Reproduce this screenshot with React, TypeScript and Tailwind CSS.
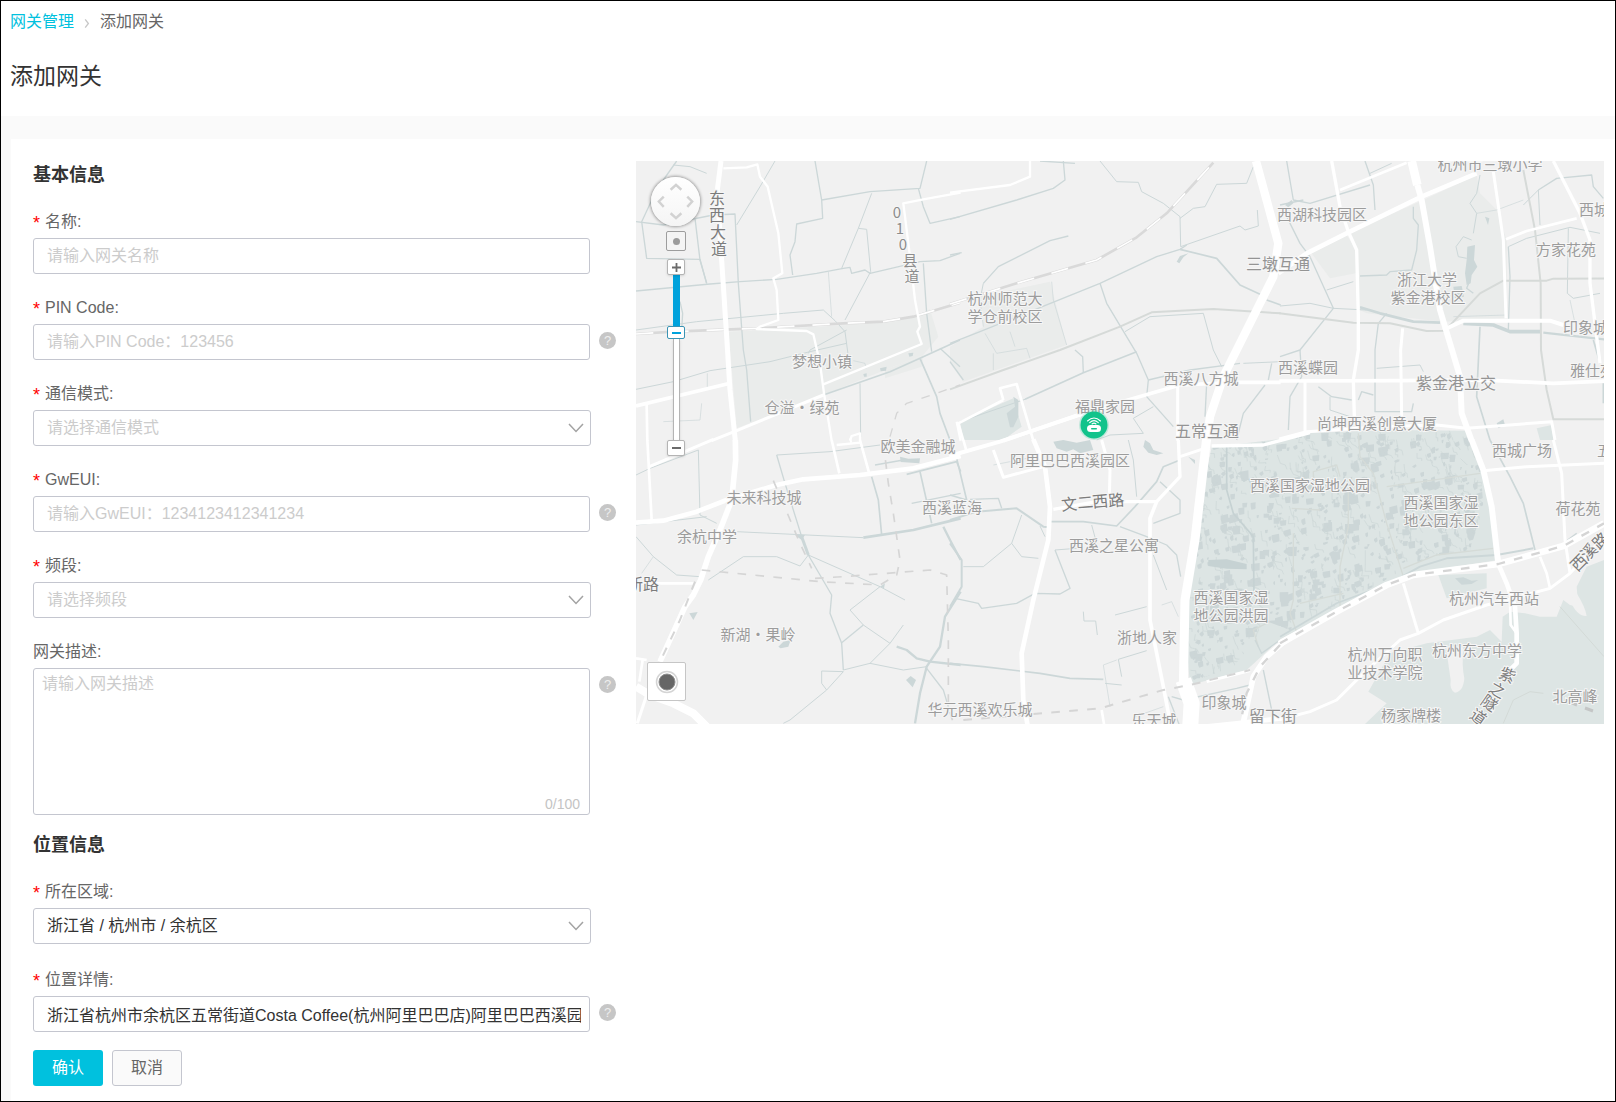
import * as React from 'react';

type Line = [points: string, width: number];

interface Tile {
  x: number;
  y: number;
  park?: string[];
  green?: string[];
  water?: Line[];
  ponds?: string[];
  gray?: Line[];
  roads?: Line[];
  rail?: Line[];
  metro?: Line[];
  paths?: string[];
}

// Wetland outline, in the coordinates of the middle bottom tile
const WETLAND =
  '785,22 990,-3 1080,-22 1340,-30 1550,-28 1610,95 1635,240 1645,360 1390,400 1310,440 990,598 890,690 720,735 705,560 740,250';

// The part of it that is covered with small ponds
const POND_AREA =
  '785,22 990,0 1080,-22 1340,-30 1540,-28 1590,60 1600,200 1560,330 1440,350 1340,400 1290,430 1020,570 940,540 915,600 850,680 725,725 708,560 740,250';

const TILES: Tile[] = [
  {
    x: 630,
    y: 150,
    park: ['296,545 650,525 850,500 900,478 925,560 880,615 765,660 580,735 320,835', '765,660 880,615 875,650 765,685'],
    ponds: ['835,610 850,608 848,618 838,620', '750,655 770,650 768,662 752,664', '700,672 710,670 710,680 702,680'],
    water: [
      ['130,45 180,50 230,70', 3],
      ['140,33 100,90 70,140 35,215 50,325 210,328 230,400', 4],
      ['18,215 100,225 250,195 315,192 325,400 340,600 350,660 362,815', 4],
      ['195,205 210,330 230,400', 4],
      ['435,33 390,110 320,225', 3],
      ['18,423 240,402 330,395 440,388 560,370 640,355 660,352 665,370 705,360 720,370 870,335 930,332 990,310', 4],
      ['555,33 575,150 578,205 500,222 495,275 480,315 488,375', 4],
      ['575,150 720,125 870,115 890,33', 4],
      ['725,130 685,235 635,355', 3],
      ['685,235 710,238 722,365 645,510', 3],
      ['865,115 880,170 900,220 990,200', 4],
      ['880,340 890,490 905,605', 4],
      ['595,365 605,500', 2],
      ['18,540 200,515 460,490 580,480 615,512 645,545 655,620', 3],
      ['650,540 540,600 535,610', 3],
      ['18,718 130,695 240,662 420,635 540,605 650,580', 3],
      ['580,735 780,665 870,625 990,570', 5],
      ['870,625 920,740 930,790 960,870', 5],
      ['930,595 990,650', 4],
      ['150,455 158,490 155,540', 4],
      ['690,700 692,860', 3],
      ['100,815 210,810 215,760', 2],
      ['232,670 232,720', 2],
      ['670,632 705,640 708,655', 2],
    ],
    rail: [['18,552 130,545 380,535 640,520 760,515 850,500 990,458', 8]],
    roads: [
      ['273,33 262,120 275,330 290,560 300,720 316,872', 15],
      ['280,55 350,52 382,43 390,80 413,110 445,250 457,370 430,385 440,420 445,510 390,530 380,537 530,543 550,553 570,640 582,730 605,872', 7],
      ['992,128 880,148 820,160 825,200 840,320 855,450 870,530 862,545 875,582 580,703', 7],
      ['18,768 300,700', 11],
      ['50,765 52,872', 8],
      ['245,872 320,842 580,735', 9],
      ['660,872 665,858 690,850 690,872', 7],
      ['980,815 992,872', 7],
    ],
    metro: [['780,860 800,790 830,760 890,740 990,705', 4]],
  },
  {
    x: 950,
    y: 150,
    park: ['90,440 300,395 350,585 40,695 0,640 0,590 100,530'],
    green: ['30,815 190,745 215,830 160,870 40,870'],
    ponds: ['170,790 195,770 190,740 205,750 205,800 190,832 180,832', '680,335 690,318 715,310 700,322 688,340'],
    water: [
      ['0,208 200,150 310,115 345,90 340,33', 4],
      ['100,400 145,350 300,272 355,258', 4],
      ['100,400 92,440', 3],
      ['0,580 90,545 450,400 620,320 690,298 710,285', 4],
      ['450,33 500,95 565,97 575,125 640,160 690,200 692,290 870,228 885,240 925,228 922,180', 3],
      ['690,205 730,175 765,170 800,103 890,100 910,50', 3],
      ['690,298 800,325 870,405 935,435', 5],
      ['950,450 992,465', 5],
      ['450,400 470,460 560,610 595,690 590,740 670,830', 4],
      ['525,545 600,500 760,490 790,600 815,650', 3],
      ['225,748 400,668 560,605', 5],
      ['375,600 398,620 400,668', 4],
      ['0,635 40,690', 4],
      ['30,815 225,748', 3],
      ['595,690 720,660 870,640', 4],
      ['880,640 992,635', 3],
      ['965,640 955,690', 4],
      ['945,705 880,790 860,870', 4],
      ['770,700 765,800', 4],
      ['440,870 480,855 580,850 550,805 610,770', 3],
      ['0,315 35,308', 4],
      ['270,33 375,40', 4],
      ['105,550 140,610 230,595 240,625', 2],
      ['180,545 195,590', 2],
      ['90,450 100,530', 2],
      ['305,395 310,450 350,585', 2],
      ['130,610 130,660', 2],
    ],
    gray: [['0,718 160,660 330,600 510,530 605,487 790,477 992,490', 6]],
    rail: [['0,462 200,400 440,330 560,262 650,190 790,38', 8]],
    roads: [
      ['0,128 180,105 240,80 240,33', 7],
      ['160,872 430,780 690,705 860,697 992,697', 11],
      ['160,750 150,715 200,702 250,872', 8],
      ['160,750 25,820 40,872', 8],
      ['683,710 683,872', 9],
      ['918,33 985,280 970,380 880,560 820,680 780,800 770,872', 25],
    ],
  },
  {
    x: 1280,
    y: 150,
    park: ['430,150 590,75 600,130 650,180 680,270 680,505 490,515 260,490 238,480 230,300 205,250', '95,310 200,255 228,300 228,370 150,385'],
    green: ['770,835 815,825 820,870 780,870'],
    ponds: [
      '520,410 545,408 552,440 525,445',
      '562,290 585,285 582,330 592,350 575,375 572,400 560,405 555,370 560,330',
      '650,820 670,808 675,825 655,835',
      '615,200 628,205 624,225',
      '15,165 35,150 40,160 25,172',
    ],
    water: [
      ['20,33 40,150 90,160 270,105', 4],
      ['255,33 280,105 285,180', 4],
      ['270,70 335,40', 3],
      ['0,165 70,150', 5],
      ['20,200 60,280 90,320 160,475 60,600 0,620', 4],
      ['140,420 220,395', 3],
      ['0,468 90,460 160,475 260,480', 3],
      ['400,170 400,205 415,225 410,300 395,360 330,365 320,375 240,378', 4],
      ['600,75 590,130 570,160 590,190 580,250', 3],
      ['575,270 550,260 528,290 535,320 560,325', 3],
      ['568,395 560,415 580,430', 4],
      ['590,190 650,180 730,150', 2],
      ['240,472 300,490 400,515 480,518', 8],
      ['550,520 640,525 690,545 780,545', 11],
      ['790,548 1008,572', 7],
      ['520,500 680,495', 2],
      ['685,290 690,380 685,540', 4],
      ['685,290 740,265 870,232 960,250', 3],
      ['775,120 830,85 935,75 940,110 970,145', 4],
      ['775,120 780,225', 3],
      ['730,165 775,120', 3],
      ['865,235 862,430 880,445 960,430', 3],
      ['870,450 885,520', 2],
      ['320,490 295,520 285,600 285,785 395,785 400,760', 4],
      ['290,655 420,645 430,665', 3],
      ['600,530 590,740 630,870', 5],
      ['60,600 65,680 30,740 25,840', 4],
      ['115,710 155,740 215,750', 4],
      ['150,740 150,780 210,800', 3],
      ['235,750 245,725 280,735', 4],
      ['940,570 960,640', 5],
      ['970,700 970,760', 5],
    ],
    gray: [
      ['-2,490 220,518 330,520 440,543 495,542 600,430 670,392 800,392 820,386 1008,385', 6],
      ['730,60 765,240 782,400 783,600 800,720 820,808 1008,808', 6],
    ],
    roads: [
      ['-5,370 80,310 210,245 425,140 590,70', 14],
      ['155,33 180,170 205,245 230,300 235,500 235,600 220,690 223,800', 10],
      ['180,120 380,38', 8],
      ['640,65 670,270 678,505', 9],
      ['820,33 900,190 930,270 930,400 960,640', 10],
      ['678,268 740,243 890,205', 8],
      ['490,540 550,512 810,512 850,525', 12],
      ['-2,693 360,692 530,690 650,692 820,700 1008,692', 11],
      ['368,535 362,600 365,800', 9],
      ['75,695 75,845', 9],
      ['-2,867 80,845 300,830 470,825 560,835 815,815 825,870', 9],
      ['395,33 412,105', 26],
      ['412,105 425,150 450,290 480,480 540,680 545,790 575,872', 18],
    ],
  },
  {
    x: 630,
    y: 440,
    ponds: [
      '810,50 835,56 870,55 868,70 812,66',
      '445,620 460,605 482,600 475,620 452,625',
      '178,520 203,516 190,540',
      '828,720 842,708 858,720 848,742',
      '495,285 525,285 515,300',
      '750,440 765,430 762,445',
    ],
    water: [
      ['18,105 60,85 205,30 210,225 260,250', 3],
      ['440,45 600,35 750,15', 3],
      ['440,45 465,130 515,290 535,345', 4],
      ['515,290 535,345', 9],
      ['535,345 605,465 600,520 635,610 640,690', 4],
      ['18,255 230,230', 3],
      ['320,275 700,293', 3],
      ['700,293 850,270 992,235', 8],
      ['18,290 70,350 140,405 210,410', 3],
      ['70,350 35,400', 2],
      ['235,420 340,350 440,350 510,378 535,345 750,440 825,480', 3],
      ['750,440 660,510 700,555 780,610 820,555', 3],
      ['700,555 635,608', 4],
      ['725,110 745,180 755,285', 5],
      ['870,95 905,250', 5],
      ['830,103 980,65 992,95', 5],
      ['735,75 820,60', 4],
      ['940,260 960,300 992,360', 7],
      ['845,190 992,160', 4],
      ['992,455 945,530 930,620 890,680 870,760 855,850', 7],
      ['800,620 830,630 860,655 900,665 992,675', 7],
      ['640,690 720,670 820,690 890,680', 3],
      ['720,670 780,610', 3],
      ['640,695 575,693 575,730 590,750 640,695', 3],
      ['590,750 480,840 460,850', 3],
      ['890,685 940,750 955,800', 4],
    ],
    roads: [
      ['18,248 100,242 200,215 290,180 440,135 520,118 690,105 850,85 992,48', 14],
      ['52,0 65,240', 8],
      ['58,80 250,-2', 9],
      ['605,0 628,100', 8],
      ['690,0 717,98', 8],
      ['620,15 690,8', 7],
      ['660,-5 664,8', 6],
      ['20,430 195,430', 8],
      ['316,0 317,60 305,180 270,270 235,350 212,420 190,465 165,500 90,665', 17],
      ['18,740 60,765 130,790 190,820 250,880', 24],
      ['18,655 50,660', 8],
      ['38,660 28,725', 8],
      ['50,765 22,850', 9],
    ],
    metro: [
      ['215,390 440,412 570,425 750,435 800,405 810,360 790,220 775,130 765,50', 5],
      ['430,122 470,215 510,310 545,385', 5],
      ['555,415 640,410 900,390 950,405 955,600 955,800 970,850', 5],
      ['195,425 150,540 90,665', 6],
    ],
  },
  {
    x: 950,
    y: 440,
    green: [WETLAND],
    ponds: [
      '585,0 600,10 610,30 640,40 620,45 595,38 580,20',
      '310,5 340,0 380,8 420,0 430,30 390,40 370,28 350,35 320,25',
      '715,50 735,60 735,72',
    ],
    water: [
      ['20,55 50,180 0,165', 5],
      ['60,178 145,175 155,205', 4],
      ['0,240 80,215 200,205 280,260 300,262', 6],
      ['300,245 400,245 500,258 555,200 620,125 640,80 690,60', 5],
      ['215,225 185,310 100,380 40,380', 3],
      ['185,310 215,350 265,355', 3],
      ['0,310 35,360 35,440 15,475 0,500', 6],
      ['15,475 85,490 95,505 200,490 255,460 330,462 360,445 315,330', 4],
      ['315,330 380,325 ', 3],
      ['270,258 285,290', 3],
      ['425,255 440,310', 3],
      ['510,260 590,290 650,315 680,345 692,410', 4],
      ['400,515 402,543 437,543 442,585', 3],
      ['495,525 590,500', 3],
      ['610,345 650,450', 3],
      ['635,495 665,485 685,530', 2],
      ['0,670 100,680 270,700 360,715 460,718', 5],
      ['590,632 505,658 515,710', 3],
      ['515,735 465,730', 3],
      ['500,660 460,675 480,800', 2],
      ['630,125 690,180 690,220 610,250', 4],
      ['535,0 550,60 560,170', 3],
      ['130,75 230,55 300,40', 2],
      ['665,770 700,780 860,745 900,735', 4],
      ['940,690 965,810', 4],
      ['555,830 640,800', 2],
      ['655,770 690,860', 4],
      ['915,600 935,640 990,600', 4],
    ],
    roads: [
      ['-2,48 150,5 430,-90', 12],
      ['250,-2 285,80 300,200 295,300 250,480 215,640 220,780 235,870', 14],
      ['455,0 480,90 478,180', 9],
      ['310,208 440,185 620,185 690,110 685,0', 10],
      ['130,30 160,112 280,80', 9],
      ['40,0 50,35', 8],
      ['690,50 755,28', 9],
      ['620,185 600,235 600,540 640,740 665,870', 11],
      ['785,18 940,15 1080,-22', 10],
      ['455,810 465,870', 8],
      ['770,-5 735,300 705,480 700,740', 27],
      ['700,720 725,790 720,870', 48],
      ['1010,598 950,650 910,710 875,870', 17],
      ['745,862 860,850 992,835', 14],
      ['770,725 900,692', 9],
    ],
    metro: [
      ['40,840 250,822', 6],
      ['250,822 450,805 640,750 720,735 900,690', 6],
      ['990,615 930,680 890,760 875,830', 7],
    ],
  },
  {
    x: 1280,
    y: 440,
    green: [
      '265,755 330,640 440,610 590,590 630,570 665,605 668,530 690,515 735,520 780,530 830,530 850,480 870,495 895,500 890,440 920,380 972,360 972,852 255,852 320,790',
      '475,405 620,400 620,445 500,475',
    ],
    ponds: ['525,415 550,412 575,422 595,420 575,432 545,434'],
    water: [
      ['630,0 690,110 730,190 765,330', 5],
      ['330,430 420,380 500,355 650,345 760,325', 6],
      ['0,590 170,490 330,430', 5],
      ['850,310 890,280', 4],
    ],
    paths: ['840,500 972,650', '670,850 700,780 750,755 790,760'],
    roads: [
      ['-2,612 170,515 320,435 400,405 655,372 850,318 972,250', 20],
      ['575,0 610,90 635,200 655,372', 18],
      ['655,372 680,430 705,500 710,580 710,670 690,690', 14],
      ['690,480 692,555 710,580', 8],
      ['40,828 90,815 170,780 250,700 360,600 415,580 490,540 620,495 700,475 810,445 870,400 972,290', 9],
      ['370,430 415,580', 9],
      ['780,350 800,400 810,445', 8],
      ['820,0 845,100 855,300 870,400', 9],
      ['610,92 740,80 972,70', 9],
      ['-2,838 40,828', 12],
    ],
    metro: [['0,610 170,515 320,435 400,405 655,372 850,318 972,250', 7]],
  },
];

const WETLAND_PATHS = [
  '1225,-20 1230,50 1270,100 1310,250 1360,410',
  '1090,140 1090,95 1160,75 1170,110',
  '1310,140 1590,100',
  '1025,205 1110,210',
  '1195,130 1195,260 1170,380 1170,500',
  '1030,280 1030,480 1020,520 1045,590',
  '1360,385 1460,345 1630,325',
  '1050,490 1180,460',
  '960,545 910,570 925,620',
];

// Small ponds of the wetland, placed by a seeded generator so the map is stable
function buildPonds(count: number) {
  let seed = 11;
  const next = () => {
    seed = (seed * 16807) % 2147483647;
    return seed / 2147483647;
  };
  return Array.from({ length: count }, () => {
    const x = Math.round(710 + next() * 880);
    const y = Math.round(-30 + next() * 760);
    const size = next() ** 3;
    const w = Math.round(4 + next() * 6 + size * 20);
    const h = Math.round(4 + next() * 8 + size * 18);
    const k = Math.round(next() * 7);
    return `M${x},${y + k} l${w},${-k} l${k - 3},${h} l${-w + 3},${k} l${-k},${-Math.round(h / 2)} z`;
  }).join(' ');
}

// Narrow ditches between the ponds
function buildDitches(count: number) {
  let seed = 97;
  const next = () => {
    seed = (seed * 16807) % 2147483647;
    return seed / 2147483647;
  };
  return Array.from({ length: count }, () => {
    const x = Math.round(710 + next() * 880);
    const y = Math.round(-30 + next() * 760);
    const a = Math.round(next() * 14 - 4);
    const b = Math.round(8 + next() * 22);
    const c = Math.round(next() * 22);
    return `M${x},${y} l${a},${b} l${c},${Math.round(a / 2)} l${Math.round(a / 2)},${Math.round(b / 2)}`;
  }).join(' ');
}

const PONDS = buildPonds(950);
const DITCHES = buildDitches(420);

type Anchor = 'start' | 'middle' | 'end';
interface Place {
  x: number;
  y: number;
  text: string;
  anchor?: Anchor;
}

const PLACES: Place[] = [
  { x: 822, y: 360, text: '梦想小镇' },
  { x: 802, y: 406, text: '仓溢·绿苑' },
  { x: 1005, y: 297, text: '杭州师范大' },
  { x: 1005, y: 315, text: '学仓前校区' },
  { x: 1201, y: 377, text: '西溪八方城' },
  { x: 1105, y: 405, text: '福鼎家园' },
  { x: 1490, y: 163, text: '杭州市三墩小学' },
  { x: 1322, y: 213, text: '西湖科技园区' },
  { x: 1579, y: 208, text: '西城', anchor: 'start' },
  { x: 1566, y: 248, text: '方家花苑' },
  { x: 1427, y: 278, text: '浙江大学' },
  { x: 1428, y: 296, text: '紫金港校区' },
  { x: 1563, y: 326, text: '印象城', anchor: 'start' },
  { x: 1308, y: 366, text: '西溪蝶园' },
  { x: 1570, y: 369, text: '雅仕苑', anchor: 'start' },
  { x: 1377, y: 422, text: '尚坤西溪创意大厦' },
  { x: 918, y: 445, text: '欧美金融城' },
  { x: 764, y: 496, text: '未来科技城' },
  { x: 707, y: 535, text: '余杭中学' },
  { x: 758, y: 633, text: '新湖·果岭' },
  { x: 952, y: 506, text: '西溪蓝海' },
  { x: 980, y: 708, text: '华元西溪欢乐城' },
  { x: 1070, y: 459, text: '阿里巴巴西溪园区' },
  { x: 1114, y: 544, text: '西溪之星公寓' },
  { x: 1310, y: 484, text: '西溪国家湿地公园' },
  { x: 1231, y: 596, text: '西溪国家湿' },
  { x: 1231, y: 614, text: '地公园洪园' },
  { x: 1147, y: 636, text: '浙地人家' },
  { x: 1154, y: 719, text: '乐天城' },
  { x: 1224, y: 701, text: '印象城' },
  { x: 1522, y: 449, text: '西城广场' },
  { x: 1597, y: 449, text: '五', anchor: 'start' },
  { x: 1441, y: 501, text: '西溪国家湿' },
  { x: 1441, y: 519, text: '地公园东区' },
  { x: 1578, y: 507, text: '荷花苑' },
  { x: 1494, y: 597, text: '杭州汽车西站' },
  { x: 1385, y: 653, text: '杭州万向职' },
  { x: 1385, y: 671, text: '业技术学院' },
  { x: 1477, y: 649, text: '杭州东方中学' },
  { x: 1575, y: 695, text: '北高峰' },
  { x: 1411, y: 714, text: '杨家牌楼' },
];

const JUNCTIONS: Place[] = [
  { x: 1278, y: 263, text: '三墩互通' },
  { x: 1207, y: 430, text: '五常互通' },
  { x: 1456, y: 382, text: '紫金港立交' },
  { x: 1273, y: 715, text: '留下街' },
];

// Road names run along the road, one glyph at a time: [glyph, x, y, angle]
const ROAD_NAMES: [string, number, number, number][] = [
  ['东', 717, 197, 0],
  ['西', 717, 214, 0],
  ['大', 718, 231, 0],
  ['道', 719, 248, 0],
  ['文', 1069, 503, -5],
  ['二', 1085, 501, -5],
  ['西', 1100, 500, -5],
  ['路', 1116, 499, -5],
  ['西', 1578, 562, -45],
  ['溪', 1588, 551, -45],
  ['路', 1600, 540, -45],
  ['紫', 1508, 674, 25],
  ['之', 1498, 689, 30],
  ['隧', 1490, 702, 35],
  ['道', 1479, 716, 35],
  ['新', 635, 583, 0],
  ['路', 651, 583, 0],
];

const COUNTY_ROAD: [string, number, number][] = [
  ['0', 897, 211],
  ['1', 900, 227],
  ['0', 903, 243],
  ['县', 910, 259],
  ['道', 912, 275],
];

function Lines({ items, className }: { items?: Line[]; className: string }) {
  return (
    <g className={className} fill="none" strokeLinejoin="round">
      {items?.map(([points, width]) => (
        <polyline key={points} points={points} strokeWidth={width} />
      ))}
    </g>
  );
}

function Areas({ items, className }: { items?: string[]; className: string }) {
  return (
    <g className={className}>
      {items?.map((points) => (
        <polygon key={points} points={points} />
      ))}
    </g>
  );
}

function tileTransform(tile: { x: number; y: number }) {
  return `translate(${tile.x} ${tile.y}) scale(${1 / 3})`;
}

function BaseMap() {
  return (
    <svg
      viewBox="636 161 968 563"
      preserveAspectRatio="xMidYMid slice"
      className="block h-[563px] w-full bg-[#f1f1f1]"
      role="img"
      aria-label="地图"
    >
      <defs>
        <clipPath id="ponds">
          <polygon points={POND_AREA} />
        </clipPath>
      </defs>

      {TILES.map((tile, i) => (
        <g key={i} transform={tileTransform(tile)}>
          <Areas items={tile.park} className="fill-[#eaeceb]" />
          <Areas items={tile.green} className="fill-[#dde5e4]" />
        </g>
      ))}

      {/* Wetland texture */}
      <g transform={tileTransform(TILES[4])}>
        <g clipPath="url(#ponds)">
          <path d={PONDS} className="fill-[#ccd6d7]" />
          <path d={DITCHES} fill="none" strokeWidth={2} className="stroke-[#ccd6d7]" />
        </g>
        <polyline points="830,20 830,150 850,220 910,290 912,470" fill="none" strokeWidth={5} className="stroke-[#c6d2d3]" />
        <polygon points="775,360 830,358 890,372 890,388 830,386 775,378" className="fill-[#c6d2d3]" />
        <g fill="none" strokeWidth={4} className="stroke-[#d5dbd7]">
          {WETLAND_PATHS.map((p) => (
            <polyline key={p} points={p} />
          ))}
        </g>
      </g>

      {/* Inlets between the hills */}
      <g transform={tileTransform(TILES[5])} className="fill-[#f1f1f1]">
        <path d="M498,622 L550,622 Q545,680 553,715 Q550,755 525,758 Q508,750 512,720 Z" />
        <path d="M870,480 Q890,530 920,528 Q915,500 890,460 Z" />
      </g>

      {TILES.map((tile, i) => (
        <g key={i} transform={tileTransform(tile)}>
          <Lines items={tile.water} className="stroke-[#ccd7d8]" />
          <Areas items={tile.ponds} className="fill-[#ccd7d8]" />
          <g fill="none" strokeWidth={3} className="stroke-[#d3dad7]">
            {tile.paths?.map((p) => (
              <polyline key={p} points={p} />
            ))}
          </g>
        </g>
      ))}

      {TILES.map((tile, i) => (
        <g key={i} transform={tileTransform(tile)}>
          <Lines items={tile.gray} className="stroke-[#d6dad8]" />
          <Lines items={tile.rail} className="stroke-[#d9d9d9]" />
          <g fill="none" strokeWidth={5} strokeDasharray="52 54" className="stroke-white">
            {tile.rail?.map(([p]) => (
              <polyline key={p} points={p} />
            ))}
          </g>
        </g>
      ))}

      {TILES.map((tile, i) => (
        <g key={i} transform={tileTransform(tile)}>
          <Lines items={tile.roads} className="stroke-white" />
        </g>
      ))}

      {TILES.map((tile, i) => (
        <g key={i} transform={tileTransform(tile)} strokeDasharray="26 28">
          <Lines items={tile.metro} className="stroke-[#d5d5d5]" />
        </g>
      ))}
      <path d="M1570,702 l7,3 M1585,708 l8,3" strokeWidth={3} className="stroke-[#c4c6c6]" />

      {/* Labels */}
      <g
        className="fill-[#9c9c9c] stroke-[#f6f6f6] font-['Noto_Sans_CJK_SC',sans-serif] text-[15px]"
        strokeWidth={2}
        paintOrder="stroke"
        dominantBaseline="central"
      >
        {PLACES.map((p) => (
          <text key={`${p.x}-${p.y}`} x={p.x} y={p.y} textAnchor={p.anchor ?? 'middle'}>
            {p.text}
          </text>
        ))}
        <g className="fill-[#8c8c8c]">
          {COUNTY_ROAD.map(([glyph, x, y]) => (
            <text key={y} x={x} y={y} textAnchor="middle">
              {glyph}
            </text>
          ))}
        </g>
      </g>
      <g
        className="fill-[#949494] stroke-[#f6f6f6] font-['Noto_Sans_CJK_SC',sans-serif] text-[16px]"
        strokeWidth={2}
        paintOrder="stroke"
        dominantBaseline="central"
        textAnchor="middle"
      >
        {JUNCTIONS.map((p) => (
          <text key={p.text} x={p.x} y={p.y}>
            {p.text}
          </text>
        ))}
        <g className="fill-[#7c7c7c]">
          {ROAD_NAMES.map(([glyph, x, y, angle]) => (
            <text key={`${x}-${y}`} x={x} y={y} transform={`rotate(${angle} ${x} ${y})`}>
              {glyph}
            </text>
          ))}
        </g>
      </g>

      {/* Gateway marker */}
      <g transform="translate(1094 425)">
        <circle r="15" className="fill-[#13c38b]/20" />
        <circle r="13.5" className="fill-[#12c38b]" />
        <rect x="-7" y="0" width="14" height="7" rx="3.5" className="fill-white" />
        <rect x="-3" y="3" width="6" height="1.5" rx="0.7" className="fill-[#12c38b]" />
        <g fill="none" strokeLinecap="round" strokeWidth="1.1" className="stroke-white">
          <path d="M-6.5,-4 Q0,-10 6.5,-4" />
          <path d="M-4.3,-2.4 Q0,-6.4 4.3,-2.4" />
          <path d="M-2,-1 Q0,-2.8 2,-1" />
        </g>
      </g>
    </svg>
  );
}

function MapControls() {
  return (
    <>
      {/* Pan */}
      <button
        type="button"
        aria-label="平移地图"
        className="absolute top-4 left-[15px] size-[49px] rounded-full bg-linear-to-b from-white to-[#f5f5f5] shadow-[0_0_3px_1px_rgba(0,0,0,0.35)]"
      >
        <svg viewBox="0 0 50 50" className="size-full" fill="none" strokeWidth="2.5">
          <g className="stroke-[#d2d2d2]">
            <path d="M20,13 L25.500,8 L31,13" />
            <path d="M20,37 L25.500,42 L31,37" />
            <path d="M13,20 L8,25 L13,30.500" />
            <path d="M37,20 L42,25 L37,30.500" />
          </g>
        </svg>
      </button>

      <button
        type="button"
        aria-label="回到中心"
        className="absolute top-[70px] left-[30px] flex size-5 items-center justify-center rounded-xs border border-[#9d9d9d] bg-[#f4f4f4]"
      >
        <span className="size-[7px] rounded-full bg-[#9b9b9b]" />
      </button>

      {/* Zoom */}
      <div className="absolute top-[98px] left-[31px] flex w-[18px] flex-col items-center">
        <button
          type="button"
          aria-label="放大"
          className="relative z-10 flex h-4 w-full items-center justify-center rounded-xs border border-[#b4b4b4] bg-white shadow-sm"
        >
          <svg viewBox="0 0 10 10" className="size-[9px] stroke-[#6b6b6b]" strokeWidth="2">
            <path d="M0,5 H10 M5,0 V10" />
          </svg>
        </button>
        <div className="h-[51px] w-[7px] bg-[#00a2dc]" />
        <div className="relative z-10 flex h-[13px] w-full items-center justify-center rounded-xs border border-[#3a93b4] bg-white">
          <span className="h-[2px] w-[9px] bg-[#00a2dc]" />
        </div>
        <div className="h-[101px] w-[7px] border-x border-[#b4b4b4] bg-white shadow-sm" />
        <button
          type="button"
          aria-label="缩小"
          className="relative z-10 flex h-4 w-full items-center justify-center rounded-xs border border-[#b4b4b4] bg-white shadow-sm"
        >
          <span className="h-[2px] w-[9px] bg-[#6b6b6b]" />
        </button>
        <input
          type="range"
          min={3}
          max={18}
          defaultValue={13}
          aria-label="缩放级别"
          className="absolute top-4 left-0 h-[165px] w-[18px] opacity-0 [writing-mode:vertical-lr]"
        />
      </div>

      {/* Locate */}
      <button
        type="button"
        aria-label="定位"
        className="absolute bottom-[23px] left-[11px] flex size-[39px] items-center justify-center rounded-xs border border-[#c6c6c6] bg-white"
      >
        <svg viewBox="0 0 24 24" className="size-6">
          <circle cx="12" cy="12" r="10.500" className="fill-white stroke-[#d4d4d4]" strokeWidth="1.500" />
          <circle cx="12" cy="12" r="8" className="fill-[#666] stroke-[#8f8f8f]" strokeWidth="1" />
        </svg>
      </button>
    </>
  );
}

function HelpIcon() {
  return (
    <span
      title="帮助"
      className="mt-2 flex size-[17px] shrink-0 items-center justify-center rounded-full bg-[#c6c6c6] text-[13px] leading-none text-[#eeeeee]"
    >
      ?
    </span>
  );
}

interface FieldProps {
  id: string;
  label: string;
  required?: boolean;
  help?: boolean;
  children: React.ReactNode;
}

function Field({ id, label, required = true, help, children }: FieldProps) {
  return (
    <div>
      <label htmlFor={id} className="mb-1 flex h-6 leading-6 text-[#666]">
        {required && <span className="w-3 pt-px text-[18px] text-[#f00]">*</span>}
        {label}:
      </label>
      <div className="flex items-start gap-[9px]">
        {children}
        {help && <HelpIcon />}
      </div>
    </div>
  );
}

const INPUT =
  'block h-9 w-[557px] rounded-[3px] border border-[#c4c6cf] bg-white pr-2 pl-[13px] text-[#333] outline-none placeholder:text-[#ccc]';

function Select({ id, value, placeholder }: { id: string; value?: string; placeholder?: string }) {
  return (
    <div className="relative w-[558px]">
      <select
        id={id}
        defaultValue={value ?? ''}
        className={`block h-9 w-full appearance-none rounded-[3px] border border-[#c4c6cf] bg-white px-[13px] outline-none ${value ? 'text-[#333]' : 'text-[#ccc]'}`}
      >
        <option value={value ?? ''}>{value ?? placeholder}</option>
      </select>
      <svg
        viewBox="0 0 16 10"
        fill="none"
        strokeWidth="1.500"
        className="pointer-events-none absolute top-[13px] right-[7px] h-[10px] w-4 stroke-[#a3a3a3]"
      >
        <path d="M1,1 L8,8.500 L15,1" />
      </svg>
    </div>
  );
}

export default function App() {
  return (
    <div className="flex min-h-screen flex-col border border-black bg-[#fafafa] font-['Liberation_Sans','Noto_Sans_CJK_SC',sans-serif] text-base text-[#333]">
      {/* Header */}
      <header className="bg-white px-[9px] pt-[9px] pb-6">
        <nav className="flex items-center leading-6">
          <a href="#" className="text-[#00c1de]">
            网关管理
          </a>
          <svg viewBox="0 0 6 10" fill="none" strokeWidth="1.500" className="mx-[10px] mt-0.5 h-[9px] w-[6px] stroke-[#c8c8c8]">
            <path d="M1,0.500 L4.500,5 L1,9.500" />
          </svg>
          <span className="text-[#666]">添加网关</span>
        </nav>
        <h1 className="mt-[26px] text-[23px] leading-8">添加网关</h1>
      </header>

      {/* Panel */}
      <main className="mt-[23px] ml-[10px] flex flex-1 items-start gap-5 bg-white px-[22px] pt-[22px] pr-[11px] pb-[15px]">
        <form className="w-[583px] shrink-0" onSubmit={(e) => e.preventDefault()}>
          <h2 className="mb-[21px] text-lg leading-7 font-bold">基本信息</h2>
          <div className="flex flex-col gap-[22px]">
            <Field id="name" label="名称">
              <input id="name" className={INPUT} placeholder="请输入网关名称" />
            </Field>
            <Field id="pin" label="PIN Code" help>
              <input id="pin" className={INPUT} placeholder="请输入PIN Code：123456" />
            </Field>
            <Field id="mode" label="通信模式">
              <Select id="mode" placeholder="请选择通信模式" />
            </Field>
            <Field id="eui" label="GwEUI" help>
              <input id="eui" className={INPUT} placeholder="请输入GwEUI：1234123412341234" />
            </Field>
            <Field id="band" label="频段">
              <Select id="band" placeholder="请选择频段" />
            </Field>
            <Field id="desc" label="网关描述" required={false} help>
              <div className="relative w-[557px]">
                <textarea
                  id="desc"
                  placeholder="请输入网关描述"
                  className="block h-[147px] w-full resize-none rounded-[3px] border border-[#c4c6cf] bg-white px-2 py-[3px] leading-6 outline-none placeholder:text-[#ccc]"
                />
                <span className="absolute right-[10px] bottom-px text-sm text-[#c4c4c4]">0/100</span>
              </div>
            </Field>
          </div>

          <h2 className="mt-4 mb-[21px] text-lg leading-7 font-bold">位置信息</h2>
          <div className="flex flex-col gap-6">
            <Field id="region" label="所在区域">
              <Select id="region" value="浙江省 / 杭州市 / 余杭区" />
            </Field>
            <Field id="address" label="位置详情" help>
              <input
                id="address"
                className={INPUT}
                defaultValue="浙江省杭州市余杭区五常街道Costa Coffee(杭州阿里巴巴店)阿里巴巴西溪园"
              />
            </Field>
          </div>

          <div className="mt-[18px] flex gap-[9px]">
            <button type="submit" className="h-9 w-[70px] rounded-[3px] bg-[#00c1de] text-white">
              确认
            </button>
            <button type="button" className="h-9 w-[70px] rounded-[3px] border border-[#c4c6cf] bg-[#fafafa] text-[#666]">
              取消
            </button>
          </div>
        </form>

        <section className="relative min-w-0 flex-1 overflow-hidden">
          <BaseMap />
          <MapControls />
        </section>
      </main>
    </div>
  );
}
